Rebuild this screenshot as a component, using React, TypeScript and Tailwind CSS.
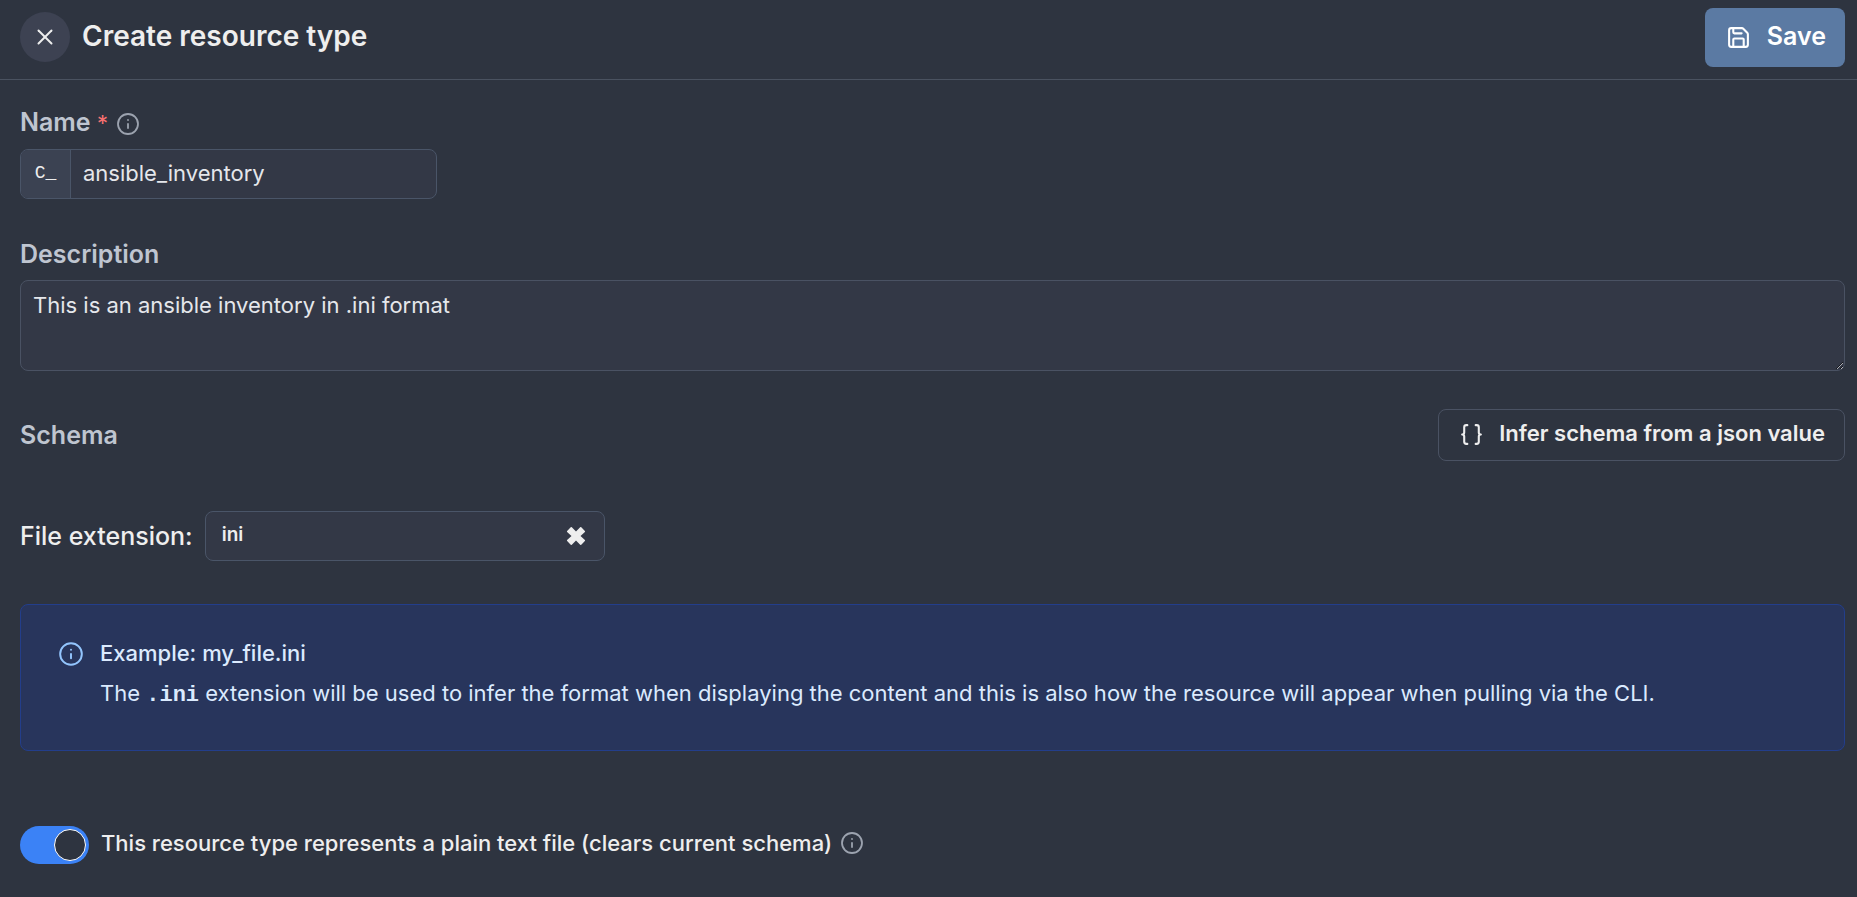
import { useState } from "react";
import { Braces, Info, Save, X } from "lucide-react";

const label = "text-[25px] leading-8 font-semibold text-[#bfc5d0]";

export default function App() {
  const [name, setName] = useState("ansible_inventory");
  const [description, setDescription] = useState("This is an ansible inventory in .ini format");
  const [extension, setExtension] = useState("ini");
  const [plainText, setPlainText] = useState(true);

  return (
    <div className="min-h-screen bg-[#2e3440] font-['Inter',sans-serif] text-[#eeeeee]">
      <header className="flex h-20 items-start justify-between border-b border-[#4a5260] pt-2 pr-3 pl-5">
        <div className="flex items-center gap-3 pt-1">
          <button aria-label="Close" className="flex size-[50px] items-center justify-center rounded-full bg-[#3d4252]">
            <X size={26} strokeWidth={1.8} />
          </button>
          <h1 className="pb-0.5 text-[28px] leading-8 font-semibold">Create resource type</h1>
        </div>
        <button className="flex h-[59px] items-center gap-4 rounded-lg bg-[#5b7aa3] pr-[19px] pl-[21px] text-[25px] leading-8 font-semibold text-white">
          <Save size={25} strokeWidth={2} />
          <span className="pb-1">Save</span>
        </button>
      </header>

      <main className="flex flex-col pt-[26px] pr-3 pl-5">
        <div className="flex h-8 items-center">
          <label htmlFor="name" className={label}>
            Name <span className="text-[22px] leading-none font-normal text-[#f87171]">*</span>
          </label>
          <Info size={24} strokeWidth={1.8} className="mt-1 ml-2 text-[#9ca3af]" aria-label="Name help" />
        </div>
        <div className="mt-[11px] flex h-[50px] w-[417px] overflow-hidden rounded-lg border border-[#4a5568] bg-[#333846]">
          <span className="flex w-[50px] shrink-0 items-center justify-center border-r border-[#4a5568] bg-[#3b4252] pb-0.5 font-['Liberation_Mono',monospace] text-lg">
            C_
          </span>
          <input
            id="name"
            value={name}
            onChange={(e) => setName(e.target.value)}
            className="min-w-0 flex-1 bg-transparent px-3 pb-0.5 text-[22px] text-[#e5e7eb] outline-none"
          />
        </div>

        <label htmlFor="description" className={`${label} mt-[39px]`}>
          Description
        </label>
        <textarea
          id="description"
          value={description}
          onChange={(e) => setDescription(e.target.value)}
          className="mt-[10px] h-[91px] w-full resize rounded-lg border border-[#4a5263] bg-[#333846] px-3 py-2 text-[22px] leading-8 text-[#e5e7eb] outline-none"
        />

        <div className="mt-[38px] flex items-center justify-between">
          <h2 className={label}>Schema</h2>
          <button className="flex h-[52px] items-center gap-[15px] rounded-lg border border-[#4a5263] pr-[19px] pb-0.5 pl-5 text-[22px] leading-8 font-semibold">
            <Braces size={25} strokeWidth={2} />
            <span className="pb-0.5">Infer schema from a json value</span>
          </button>
        </div>

        <div className="mt-[50px] flex items-center gap-3">
          <label htmlFor="extension" className="text-[25px] leading-8 font-medium">
            File extension:
          </label>
          <div className="flex h-[50px] w-[400px] items-center rounded-lg border border-[#4a5568] bg-[#333846] pr-4 pl-4">
            <input
              id="extension"
              value={extension}
              onChange={(e) => setExtension(e.target.value)}
              className="min-w-0 flex-1 bg-transparent pb-0.5 text-[19px] font-semibold outline-none"
            />
            <button aria-label="Clear file extension" onClick={() => setExtension("")} className="flex size-6 items-center justify-center">
              <svg viewBox="0 0 20 20" className="size-5" fill="currentColor">
                <path d="M5.6 1 10 5.6 14.4 1l.9.2 3.8 4-.2.9L14.5 10l4.4 3.9.2.9-3.8 4-.9.2-4.4-4.6L5.6 19l-.9-.2-3.8-4 .2-.9L5.5 10 1.1 6.1l-.2-.9 3.8-4z" />
              </svg>
            </button>
          </div>
        </div>

        <section className="mt-[43px] flex h-[147px] gap-4 rounded-lg border border-[#233e8b] bg-[#28355c] px-[37px] pt-8 text-[22px] text-[#dbeafe]">
          <Info size={26} strokeWidth={1.8} className="mt-1 shrink-0 text-[#93c5fd]" />
          <div>
            <h3 className="leading-8 font-medium">Example: my_file.ini</h3>
            <p className="mt-2 leading-8">
              The <code className="font-['Liberation_Mono',monospace] font-bold">.ini</code> extension will be used to infer the format when
              displaying the content and this is also how the resource will appear when pulling via the CLI.
            </p>
          </div>
        </section>

        <div className="mt-[75px] flex items-center">
          <input
            id="plain-text"
            type="checkbox"
            role="switch"
            checked={plainText}
            onChange={(e) => setPlainText(e.target.checked)}
            className="relative h-[38px] w-[69px] appearance-none rounded-full bg-[#4b5563] before:absolute before:top-[3px] before:left-[3px] before:size-8 before:rounded-full before:border before:border-white before:bg-[#2e3440] checked:bg-[#3b82f6] checked:before:left-[34px]"
          />
          <div className="ml-3 flex items-center gap-2 pb-1">
            <label htmlFor="plain-text" className="text-[22px] leading-8 font-medium">
              This resource type represents a plain text file (clears current schema)
            </label>
            <Info size={24} strokeWidth={1.8} className="text-[#9ca3af]" aria-label="Plain text help" />
          </div>
        </div>
      </main>
    </div>
  );
}
